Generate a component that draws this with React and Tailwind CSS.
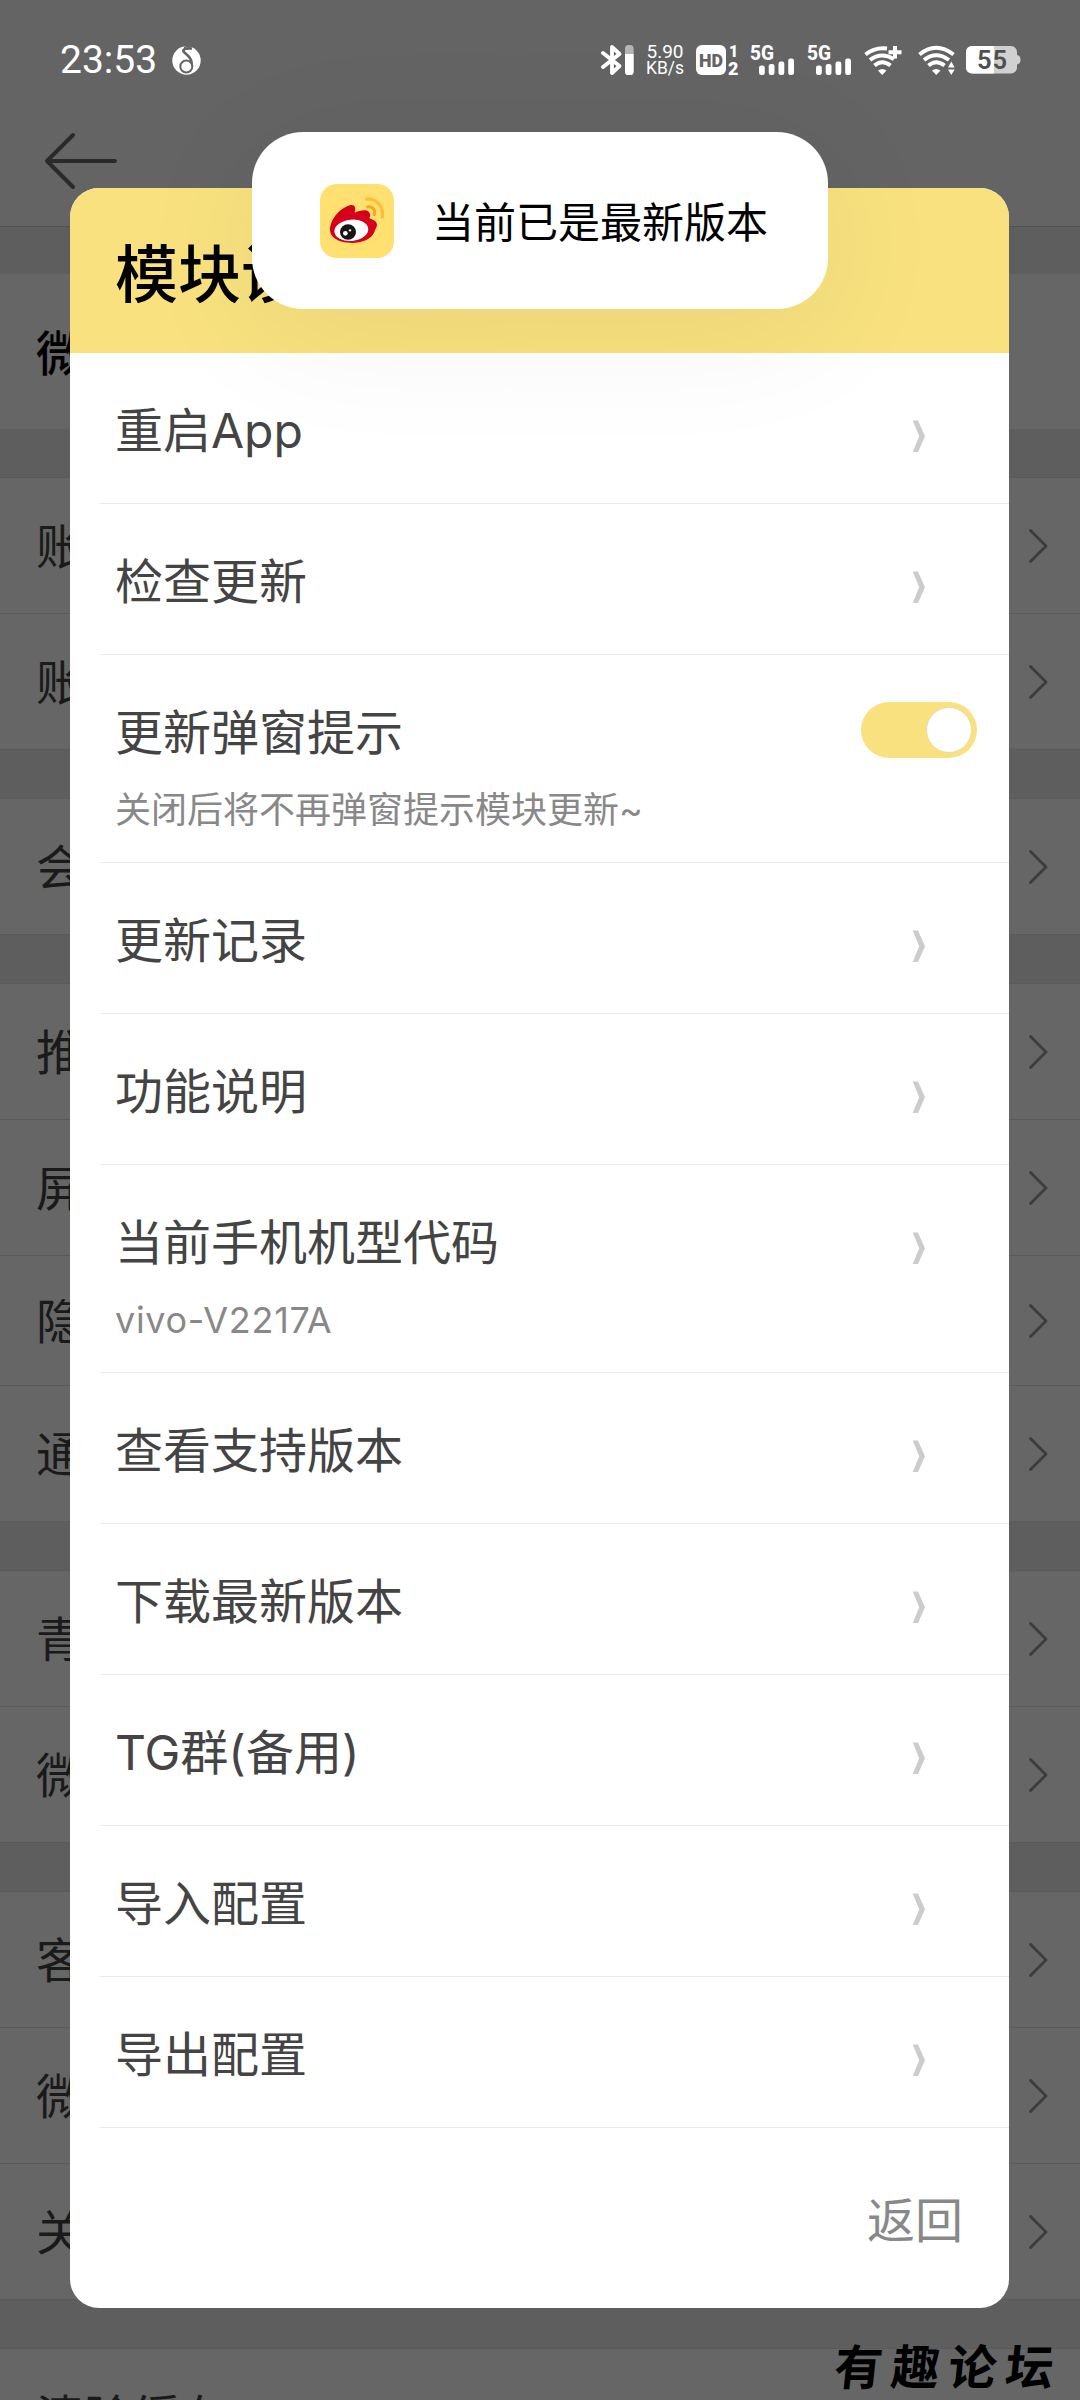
import { useState } from 'react'

// --- DATA ---
const settingGroups = [
  [{ label: '账号管理' }, { label: '账号与安全' }],
  [{ label: '会员设置' }],
  [{ label: '推送通知设置' }, { label: '屏蔽设置' }, { label: '隐私设置', compact: true }, { label: '通用设置' }],
  [{ label: '青少年模式' }, { label: '微博实验室' }],
  [{ label: '客服中心' }, { label: '微博反馈' }, { label: '关于微博' }],
  [{ label: '清除缓存' }],
]

const menuItems = [
  { id: 'restart', title: '重启App' },
  { id: 'check', title: '检查更新' },
  { id: 'popup', title: '更新弹窗提示', desc: '关闭后将不再弹窗提示模块更新~', toggle: true },
  { id: 'log', title: '更新记录' },
  { id: 'feature', title: '功能说明' },
  { id: 'device', title: '当前手机机型代码', desc: 'vivo-V2217A', latin: true },
  { id: 'support', title: '查看支持版本' },
  { id: 'download', title: '下载最新版本' },
  { id: 'tg', title: 'TG群(备用)' },
  { id: 'import', title: '导入配置' },
  { id: 'export', title: '导出配置' },
]

// --- STATUS BAR ---
function SignalIcon() {
  return (
    <svg className="overflow-visible" width="44" height="30" viewBox="0 0 44 30" fill="white">
      <text x="0" y="14.5" fontSize="19.5" fontWeight="800" fontFamily="Roboto, sans-serif" textLength="24" lengthAdjust="spacingAndGlyphs">5G</text>
      <rect x="9" y="20.5" width="5.8" height="9.5" rx="2.2" />
      <rect x="18.7" y="19" width="5.8" height="11" rx="2.2" />
      <rect x="28.5" y="16.5" width="5.8" height="13.5" rx="2.2" />
      <rect x="38.2" y="13.5" width="5.8" height="16.5" rx="2.2" />
    </svg>
  )
}

function WifiIcon({ plus }) {
  return (
    <svg width="38" height="30" viewBox="0 0 38 30" fill="none" stroke="white" strokeWidth="4">
      <path d={plus ? 'M1.500 9.500 Q11 2 23 3.500' : 'M1.500 9.500 Q18 -4 35.500 9.500'} />
      <path d={plus ? 'M6 15 Q17 6.500 30 14' : 'M6 15 Q18 5.500 31 15'} />
      <path d="M10.500 20.500 Q18 14 26.500 20.500" />
      <path d="M14 25.500 Q18 22.500 22.500 25.500 L18.200 30 Z" fill="white" stroke="none" />
      {plus ? (
        <path d="M31 1 V13.500 M24.500 7.200 H37.500" />
      ) : (
        <path d="M30 22.500 L33.300 16.500 L36.600 22.500 Z M30 24.500 L33.300 30 L36.600 24.500 Z" fill="white" stroke="none" />
      )}
    </svg>
  )
}

function StatusBar() {
  return (
    <div className="flex h-[120px] items-center pr-[59px] pl-[60px] text-white">
      <span className="w-[112px] text-[39px] leading-[40px] whitespace-nowrap font-[Roboto,sans-serif]">23:53</span>
      <svg width="29" height="30" viewBox="0 0 29 30">
        <circle cx="14.5" cy="15.5" r="14.2" fill="white" />
        <path d="M20 3.500 C15 3 10.500 4 11.500 6.500 C13 9 21 12 19.500 20" fill="none" stroke="#646464" strokeWidth="2.6" />
        <circle cx="14.300" cy="21.500" r="6" fill="white" stroke="#646464" strokeWidth="2" />
        <path d="M12 2.500 L20 0.500" stroke="#646464" strokeWidth="1.500" />
      </svg>

      <div className="ml-auto flex items-center">
        <svg width="34" height="30" viewBox="0 0 34 30">
          <path d="M2 8 L18.500 21 L11 28 V2 L18.500 9 L2 22" fill="none" stroke="white" strokeWidth="3.8" strokeLinejoin="round" strokeLinecap="round" />
          <rect x="24" y="0" width="8.6" height="30" rx="3.6" fill="#b5b5b5" />
          <path d="M24 9 H32.600 V26.400 A3.600 3.600 0 0 1 29 30 H27.600 A3.600 3.600 0 0 1 24 26.400 Z" fill="white" />
        </svg>
        <div className="ml-[10px] flex w-[40px] flex-col items-center text-[19px] leading-[17px] font-[Roboto,sans-serif]">
          <span>5.90</span>
          <span className="text-[17.5px]">KB/s</span>
        </div>
        <svg className="ml-[11px] overflow-visible" width="44" height="30" viewBox="0 0 44 30" fontFamily="Roboto, sans-serif" fontWeight="900">
          <rect width="30" height="30" rx="6" fill="white" />
          <text x="3" y="21.500" fontSize="18" fill="#646464" textLength="24" lengthAdjust="spacingAndGlyphs">HD</text>
          <text x="33" y="12" fontSize="16" fill="white">1</text>
          <text x="32" y="29.500" fontSize="18" fill="white">2</text>
        </svg>
        <div className="ml-[10px] flex gap-[13px]">
          <SignalIcon />
          <SignalIcon />
        </div>
        <div className="ml-[13px] flex gap-4">
          <WifiIcon plus />
          <WifiIcon />
        </div>
        <svg className="ml-[10px]" width="55" height="28" viewBox="0 0 55 28">
          <rect x="0" y="0" width="51" height="27.500" rx="6" fill="#d0d0d0" />
          <path d="M51 9 Q54.500 9.500 54.500 13.700 Q54.500 18 51 18.500 Z" fill="#d0d0d0" />
          <path d="M28 0 H6 A6 6 0 0 0 0 6 V21.500 A6 6 0 0 0 6 27.500 H28 Z" fill="white" />
          <text x="11" y="23" fontSize="25.500" fontWeight="600" fontFamily="Roboto, sans-serif" fill="#4f4f4f" textLength="30">55</text>
        </svg>
      </div>
    </div>
  )
}

// --- BACKGROUND PAGE ---
function GroupRow({ label, compact }) {
  return (
    <div
      className={`flex shrink-0 items-center justify-between border-b border-[#5a5a5a] bg-[#666666] pr-8 pl-9 text-[48px] leading-none text-[#1a1a1a] ${compact ? 'h-[130px]' : 'h-[136px]'}`}
    >
      <span className="pt-[3px] whitespace-nowrap">{label}</span>
      <svg width="19" height="34" viewBox="0 0 19 34" fill="none" stroke="#3c3c3c" strokeWidth="2.8" strokeLinecap="round" strokeLinejoin="round">
        <path d="M1.500 1.500 L17 17 L1.500 32.500" />
      </svg>
    </div>
  )
}

function SettingsPage() {
  return (
    <div className="h-[2400px] overflow-hidden bg-[#5e5e5e]">
      <div className="h-[227px] border-b border-[#525252] bg-[#646464]">
        <StatusBar />
        <svg className="mt-[12px] ml-[44px]" width="74" height="58" viewBox="0 0 74 58" fill="none" stroke="#2a2a2a" strokeWidth="4" strokeLinecap="round" strokeLinejoin="round">
          <path d="M71 29 H3 M29 3 L3 29 L29 55" />
        </svg>
      </div>
      <div className="mt-[47px] mb-[49px] flex h-[155px] items-center bg-[#666666] pt-[5px] pl-9 text-[48px] leading-none font-medium text-black">微博设置</div>
      <div className="flex flex-col gap-[49px]">
        {settingGroups.map((group, i) => (
          <div key={i} className="flex flex-col shadow-[0_-1px_0_#5a5a5a]">
            {group.map((row) => (
              <GroupRow key={row.label} label={row.label} compact={row.compact} />
            ))}
          </div>
        ))}
      </div>
    </div>
  )
}

// --- MODULE DIALOG ---
function Toggle({ checked, onChange }) {
  return (
    <button
      onClick={onChange}
      className={`mr-8 flex h-14 w-[116px] items-center rounded-full px-[5px] ${checked ? 'justify-end bg-[#f8e17e]' : 'justify-start bg-gray-300'}`}
    >
      <span className="size-[46px] rounded-full border border-[#e6dcae] bg-white" />
    </button>
  )
}

function MenuRow({ item, checked, onToggle }) {
  return (
    <div className={`ml-[30px] flex items-start justify-between border-b border-[#ebebeb] pl-[15px] ${item.desc ? 'h-[208px]' : 'h-[151px]'}`}>
      <div className="pt-[46px]">
        <div className="text-[48px] leading-[64px] text-[#444444]">{item.title}</div>
        {item.desc && (
          <div className={`mt-[18px] text-[36px] leading-[54px] text-[#888888] ${item.latin ? 'tracking-[0.7px]' : ''}`}>{item.desc}</div>
        )}
      </div>
      {item.toggle ? (
        <div className="pt-[47px]">
          <Toggle checked={checked} onChange={onToggle} />
        </div>
      ) : (
        <svg className="mt-[67px] mr-[83px]" width="14" height="33" viewBox="0 0 14 33" fill="#cccccc">
          <path d="M0.700 0.500 H6 L13 16.300 L6 32 H0.700 L7.200 16.300 Z" />
        </svg>
      )}
    </div>
  )
}

function WeiboLogo() {
  return (
    <svg width="74" height="74" viewBox="15 14 222 222" fill="none">
      <rect x="15" y="14" width="222" height="222" rx="50" fill="#ffe070" />
      <path d="M45 150 C47 117 77 84 108 77 C120 76 123 86 119 100 C135 93 154 90 161 97 C167 103 166 110 163 117 C179 122 187 129 186 138 C185 146 180 150 178 158 C170 179 141 191 111 191 C75 191 44 176 45 150 Z" fill="#d6001c" />
      <ellipse cx="109" cy="153" rx="51" ry="32" transform="rotate(-6 109 153)" fill="white" />
      <ellipse cx="99" cy="158" rx="24" ry="23" fill="#161616" />
      <circle cx="91" cy="162" r="7" fill="white" />
      <circle cx="105" cy="153" r="3.500" fill="white" />
      <path d="M158 83 C173 81 182 92 178 106" stroke="#f9a61a" strokeWidth="9.500" strokeLinecap="round" />
      <path d="M155 60 C184 56 207 82 202 113" stroke="#ffbf35" strokeWidth="9.500" strokeLinecap="round" />
    </svg>
  )
}

export default function App() {
  const [showTip, setShowTip] = useState(true)

  return (
    <div className="relative h-[2400px] w-[1080px] overflow-hidden font-[Inter,'Noto_Sans_CJK_SC',sans-serif]">
      <SettingsPage />

      {/* Dialog */}
      <div className="absolute top-[188px] left-[70px] h-[2120px] w-[939px] overflow-hidden rounded-[29px] bg-white">
        <div className="flex h-[165px] items-center bg-[#f8e17e] pt-2 pl-[45px] text-[63px] leading-none font-medium text-black">模块设置</div>
        {menuItems.map((item) => (
          <MenuRow key={item.id} item={item} checked={showTip} onToggle={() => setShowTip(!showTip)} />
        ))}
        <div className="flex justify-end pt-[61px] pr-[46px]">
          <button className="text-[48px] leading-[64px] text-[#888888]">返回</button>
        </div>
      </div>

      {/* Toast */}
      <div className="absolute top-[132px] left-[252px] flex h-[177px] w-[576px] items-center rounded-[51px] bg-white pl-[68px] shadow-[0_24px_140px_rgba(0,0,0,0.06)]">
        <WeiboLogo />
        <span className="ml-[38px] pt-1 text-[42px] leading-none whitespace-nowrap text-black">当前已是最新版本</span>
      </div>

      {/* Watermark */}
      <div className="absolute top-[2334px] left-[835px] text-[48px] leading-[60px] font-bold tracking-[9px] whitespace-nowrap text-black font-['Noto_Sans_CJK_SC',serif]">
        <span className="inline-block -skew-x-6">有趣论坛</span>
      </div>
    </div>
  )
}
